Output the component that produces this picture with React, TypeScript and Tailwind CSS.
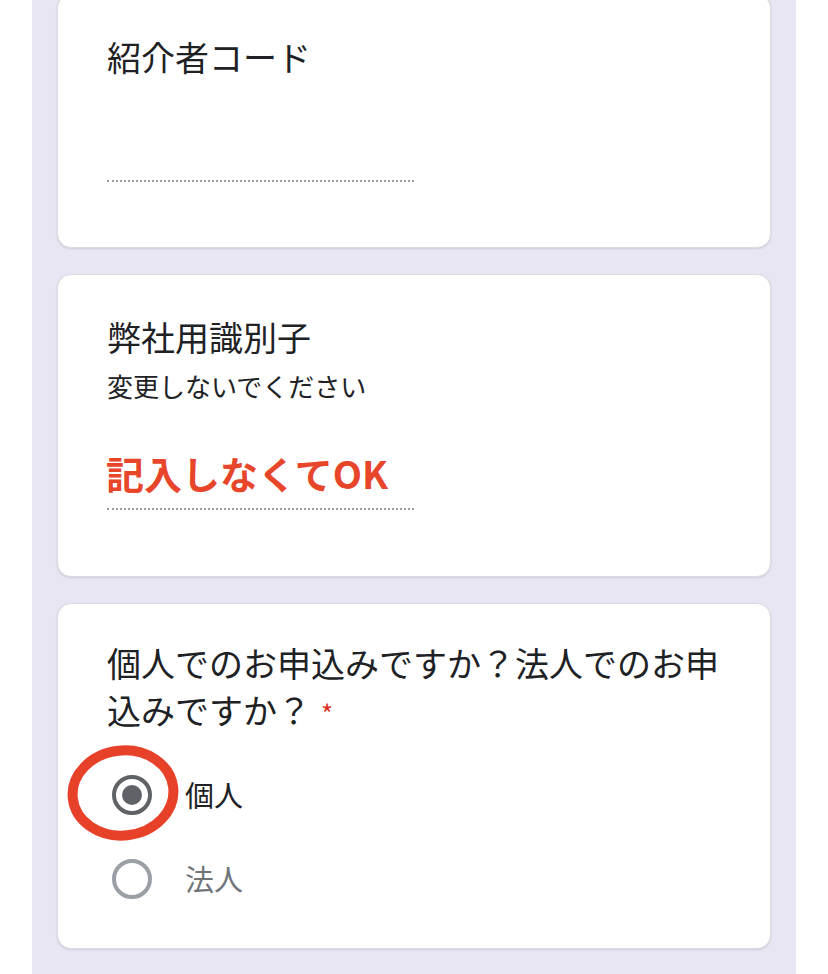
import React from "react";

const font = { fontFamily: '"Noto Sans CJK JP", "Noto Sans", sans-serif' };

function Radio({ checked }: { checked: boolean }) {
  return (
    <div
      className={
        "w-[40px] h-[40px] rounded-full border-[4px] flex items-center justify-center shrink-0 " +
        (checked ? "border-[#5f6368]" : "border-[#9aa0a6]")
      }
    >
      {checked && <div className="w-[20px] h-[20px] rounded-full bg-[#5f6368]" />}
    </div>
  );
}

export default function App() {
  return (
    <div className="w-[828px] h-[974px] overflow-hidden bg-white" style={font}>
      <div className="mx-[32px] h-full bg-[#e9e6f4] px-[25px] flex flex-col gap-[26px]">
        {/* Card 1 */}
        <div className="-mt-[6px] bg-white border border-[#dadce0] rounded-[14px] shadow-[0_1px_2px_rgba(60,64,67,0.15)] pt-[38px] pb-[65px] px-[49px]">
          <div className="text-[34px] leading-[48px] text-[#202124]">紹介者コード</div>
          <div className="mt-[42px] w-[307px] h-[59px] border-b-2 border-dotted border-[#9e9e9e]" />
        </div>

        {/* Card 2 */}
        <div className="bg-white border border-[#dadce0] rounded-[14px] shadow-[0_1px_2px_rgba(60,64,67,0.15)] pt-[38px] pb-[66px] px-[49px]">
          <div className="text-[34px] leading-[48px] text-[#202124]">弊社用識別子</div>
          <div className="mt-[9px] text-[26px] leading-[32px] text-[#202124]">変更しないでください</div>
          <div className="mt-[47px] w-[307px] pb-[11px] border-b-2 border-dotted border-[#9e9e9e]">
            <div className="text-[38px] leading-[48px] font-bold text-[#e8462b] -ml-[1px]">記入しなくてOK</div>
          </div>
        </div>

        {/* Card 3 */}
        <div className="bg-white border border-[#dadce0] rounded-[14px] shadow-[0_1px_2px_rgba(60,64,67,0.15)] pt-[35px] pb-[27px] px-[49px]">
          <div className="text-[34px] leading-[47px] text-[#202124]">
            <span>個人でのお申込みですか？法人でのお申込みですか？</span>
            <span className="text-[26px] leading-[26px] text-[#d93025] align-top ml-[10px] relative top-[14px]">*</span>
          </div>
          <div className="mt-[20px] flex flex-col">
            <div className="relative h-[84px] flex items-center pl-[5px] gap-[33px]">
              <Radio checked />
              <span className="text-[29px] text-[#202124]">個人</span>
              <svg
                className="absolute left-[-45px] top-[-12px]"
                width="122"
                height="104"
                viewBox="0 0 122 104"
              >
                <ellipse
                  cx="61"
                  cy="52"
                  rx="50.5"
                  ry="42.5"
                  fill="none"
                  stroke="#e8412a"
                  strokeWidth="10"
                  transform="rotate(-6 61 52)"
                />
              </svg>
            </div>
            <div className="h-[84px] flex items-center pl-[5px] gap-[33px]">
              <Radio checked={false} />
              <span className="text-[29px] text-[#70757a]">法人</span>
            </div>
          </div>
        </div>
      </div>
    </div>
  );
}
